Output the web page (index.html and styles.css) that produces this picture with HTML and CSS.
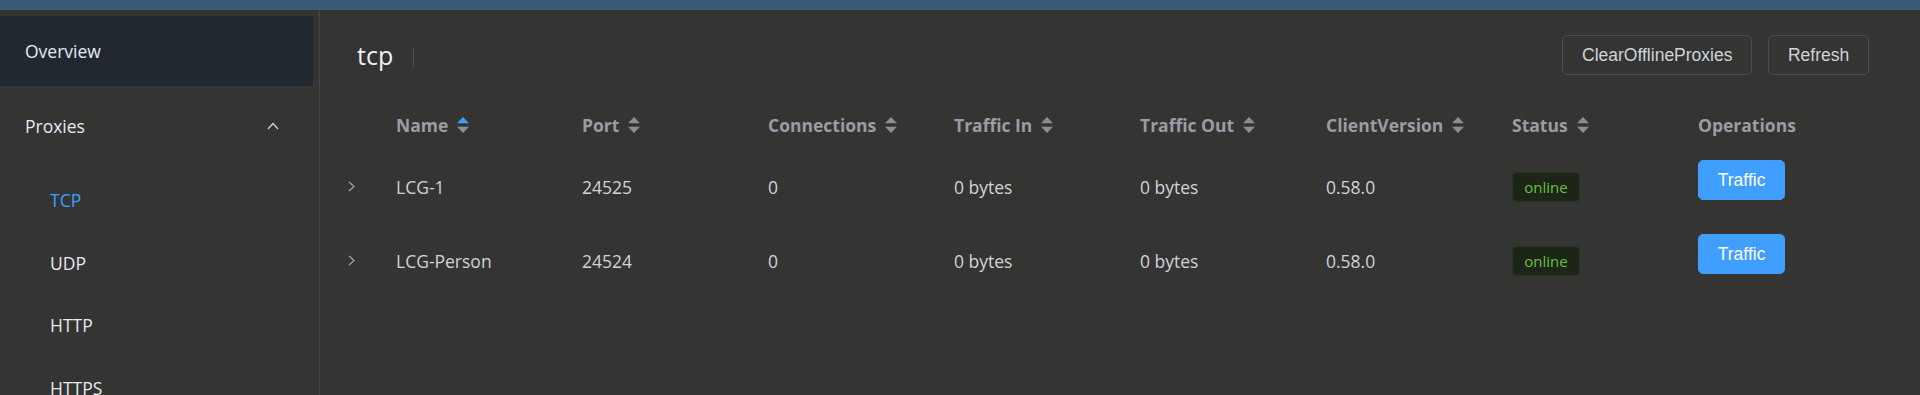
FILE: index.html
```html
<!DOCTYPE html>
<html lang="en">
<head>
    <meta charset="UTF-8">
    <meta name="viewport" content="width=device-width, initial-scale=1.0">
    <title>frps dashboard - tcp</title>
    <link rel="stylesheet" href="styles.css">
</head>
<body>
    <div class="topbar"></div>
    <div class="layout">
        <div class="sidebar">
            <div class="menu">
                <div class="menu-item active">Overview</div>
                <div class="submenu-title">
                    <span>Proxies</span>
                    <svg class="arrow-up" width="12" height="8" viewBox="0 0 12 8"><polyline points="1,7 6,1.5 11,7" fill="none" stroke="#cfd3dc" stroke-width="1.3"/></svg>
                </div>
                <div class="submenu">
                    <div class="submenu-item current">TCP</div>
                    <div class="submenu-item">UDP</div>
                    <div class="submenu-item">HTTP</div>
                    <div class="submenu-item">HTTPS</div>
                </div>
            </div>
        </div>

        <div class="main">
            <div class="page-header">
                <div class="title-wrap">
                    <span class="title">tcp</span>
                    <span class="divider"></span>
                </div>
                <div class="actions">
                    <button class="button">ClearOfflineProxies</button>
                    <button class="button">Refresh</button>
                </div>
            </div>

            <div class="table">
                <div class="row head">
                    <div class="cell"></div>
                    <div class="cell">Name<svg class="sort asc" width="12" height="16" viewBox="0 0 12 16"><path class="up" d="M0 6.3 L6 0 L12 6.3Z"/><path class="down" d="M0 9.7 L6 16 L12 9.7Z"/></svg></div>
                    <div class="cell">Port<svg class="sort" width="12" height="16" viewBox="0 0 12 16"><path class="up" d="M0 6.3 L6 0 L12 6.3Z"/><path class="down" d="M0 9.7 L6 16 L12 9.7Z"/></svg></div>
                    <div class="cell">Connections<svg class="sort" width="12" height="16" viewBox="0 0 12 16"><path class="up" d="M0 6.3 L6 0 L12 6.3Z"/><path class="down" d="M0 9.7 L6 16 L12 9.7Z"/></svg></div>
                    <div class="cell">Traffic In<svg class="sort" width="12" height="16" viewBox="0 0 12 16"><path class="up" d="M0 6.3 L6 0 L12 6.3Z"/><path class="down" d="M0 9.7 L6 16 L12 9.7Z"/></svg></div>
                    <div class="cell">Traffic Out<svg class="sort" width="12" height="16" viewBox="0 0 12 16"><path class="up" d="M0 6.3 L6 0 L12 6.3Z"/><path class="down" d="M0 9.7 L6 16 L12 9.7Z"/></svg></div>
                    <div class="cell">ClientVersion<svg class="sort" width="12" height="16" viewBox="0 0 12 16"><path class="up" d="M0 6.3 L6 0 L12 6.3Z"/><path class="down" d="M0 9.7 L6 16 L12 9.7Z"/></svg></div>
                    <div class="cell">Status<svg class="sort" width="12" height="16" viewBox="0 0 12 16"><path class="up" d="M0 6.3 L6 0 L12 6.3Z"/><path class="down" d="M0 9.7 L6 16 L12 9.7Z"/></svg></div>
                    <div class="cell">Operations</div>
                </div>

                <div class="row">
                    <div class="cell expand"><svg width="7" height="11" viewBox="0 0 7 11"><polyline points="1,1 6,5.5 1,10" fill="none" stroke="#a3a6ad" stroke-width="1.2"/></svg></div>
                    <div class="cell">LCG-1</div>
                    <div class="cell">24525</div>
                    <div class="cell">0</div>
                    <div class="cell">0 bytes</div>
                    <div class="cell">0 bytes</div>
                    <div class="cell">0.58.0</div>
                    <div class="cell"><span class="tag">online</span></div>
                    <div class="cell"><button class="button primary">Traffic</button></div>
                </div>

                <div class="row">
                    <div class="cell expand"><svg width="7" height="11" viewBox="0 0 7 11"><polyline points="1,1 6,5.5 1,10" fill="none" stroke="#a3a6ad" stroke-width="1.2"/></svg></div>
                    <div class="cell">LCG-Person</div>
                    <div class="cell">24524</div>
                    <div class="cell">0</div>
                    <div class="cell">0 bytes</div>
                    <div class="cell">0 bytes</div>
                    <div class="cell">0.58.0</div>
                    <div class="cell"><span class="tag">online</span></div>
                    <div class="cell"><button class="button primary">Traffic</button></div>
                </div>
            </div>
        </div>
    </div>
</body>
</html>
```

FILE: styles.css
```css
body {
    margin: 0;
    height: 395px;
    overflow: hidden;
    background-color: #343432;
    font-family: "Open Sans", "Noto Sans", sans-serif;
    font-size: 17.5px;
    color: #cfd3dc;
}
.topbar {
    height: 10px;
    background-color: #3b5a77;
}
.layout {
    display: flex;
    height: 385px;
}

/* sidebar */
.sidebar {
    width: 319px;
    border-right: 1px solid #464646;
    padding-top: 6px;
}
.menu {
    width: 313px;
    color: #e5eaf3;
}
.menu-item {
    height: 70px;
    display: flex;
    align-items: center;
    padding-left: 25px;
}
.menu-item.active {
    background-color: #212830;
}
.submenu-title {
    margin-top: 5px;
    height: 70px;
    display: flex;
    align-items: center;
    justify-content: space-between;
    padding: 0 34px 0 25px;
}
.submenu {
    padding-top: 8px;
}
.submenu-item {
    height: 62.5px;
    display: flex;
    align-items: center;
    padding-left: 50px;
}
.submenu-item.current {
    color: #409eff;
}

/* main */
.main {
    flex: 1;
    padding: 0 51px 0 1px;
}
.page-header {
    display: flex;
    justify-content: space-between;
    align-items: center;
    height: 40px;
    padding: 25px 0 0 36px;
}
.title-wrap {
    display: flex;
    align-items: center;
}
.title {
    font-size: 25px;
    color: #eef1f6;
}
.divider {
    width: 1px;
    height: 19px;
    margin-left: 20px;
    margin-top: 4px;
    background-color: #4c4d4f;
}
.actions {
    display: flex;
    gap: 16px;
}
.button {
    height: 40px;
    padding: 0 18.75px;
    border: 1px solid #4c4d4f;
    border-radius: 5px;
    background: transparent;
    color: #cfd3dc;
    font-family: "Liberation Sans", Arial, sans-serif;
    font-size: 17.5px;
    cursor: pointer;
}
.button.primary {
    background-color: #409eff;
    border-color: #409eff;
    color: #fff;
    margin-bottom: 13px;
}

/* table */
.table {
    margin-top: 25px;
}
.row {
    display: grid;
    grid-template-columns: 60px repeat(8, 186px);
    align-items: center;
    height: 74px;
    box-sizing: border-box;
    border-bottom: 1px solid #373735;
}
.row.head {
    height: 50px;
    color: #9a9da4;
    font-weight: bold;
}
.cell {
    display: flex;
    align-items: center;
    padding: 0 15px;
    white-space: nowrap;
}
.cell.expand {
    justify-content: center;
    padding: 0;
}
.sort {
    margin-left: 9px;
}
.sort path {
    fill: #8b8e94;
}
.sort.asc .up {
    fill: #409eff;
}
.tag {
    display: inline-flex;
    align-items: center;
    height: 30px;
    box-sizing: border-box;
    padding: 0 11.25px;
    border: 1px solid #25381d;
    border-radius: 5px;
    background-color: #1c2518;
    color: #67c23a;
    font-size: 15px;
}
```
